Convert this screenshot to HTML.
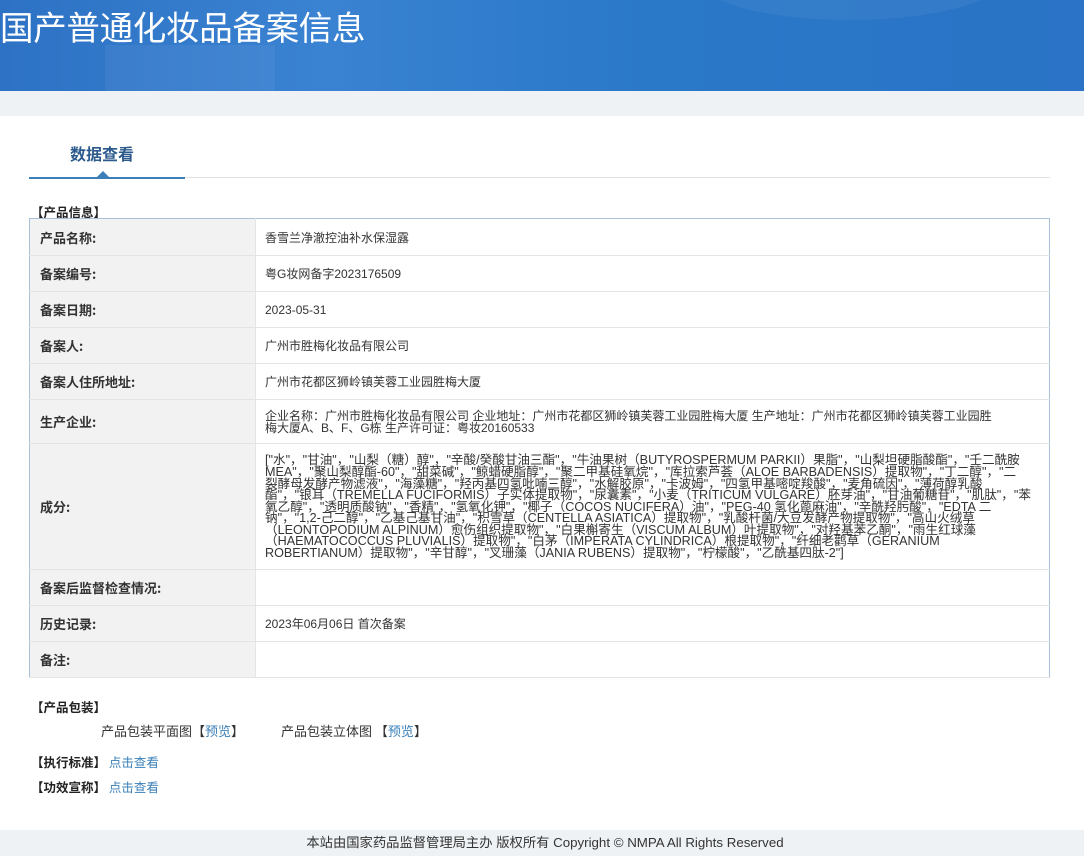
<!DOCTYPE html>
<html><head><meta charset="utf-8">
<style>
*{margin:0;padding:0;box-sizing:border-box}
body{width:1084px;height:856px;background:#fff;font-family:"Liberation Sans","Noto Sans CJK SC",sans-serif;color:#333;position:relative;overflow:hidden}
.hdr{position:absolute;left:0;top:0;width:1084px;height:91px;background:linear-gradient(90deg,#2d72c4 0%,#3a82d2 30%,#2a78c8 60%,#2a73c6 100%);overflow:hidden}
.hdr h1{position:absolute;left:0;top:1px;font-size:33.5px;font-weight:normal;color:#fff;letter-spacing:-0.3px;font-family:"Noto Sans CJK SC",sans-serif}
.band{position:absolute;left:0;top:91px;width:1084px;height:25px;background:#eef2f5}
.tab{position:absolute;left:70px;top:141px;font-size:16px;font-weight:bold;color:#2d5a8c;font-family:"Noto Sans CJK SC",sans-serif}
.line{position:absolute;left:29px;top:177px;width:1021px;height:1px;background:#e3e3e3}
.line2{position:absolute;left:29px;top:177px;width:156px;height:2px;background:#3c7fb8}
.tri{position:absolute;left:97px;top:171px;width:0;height:0;border-left:6px solid transparent;border-right:6px solid transparent;border-bottom:6px solid #3c7fb8}
.sec{position:absolute;font-size:12.5px;font-weight:bold;color:#222;font-family:"Noto Sans CJK SC",sans-serif}
table{position:absolute;left:29px;top:218px;width:1021px;border-collapse:collapse;border:1px solid #a9c0da;font-size:12px}
td{border-bottom:1px solid #e4e4e4;vertical-align:middle;font-family:"Liberation Sans","Noto Sans CJK SC",sans-serif}
td.l{width:226px;background:#f2f2f2;font-weight:bold;padding-left:10px;font-size:13px;color:#333;border-right:1px solid #e4e4e4;font-family:"Noto Sans CJK SC",sans-serif}
td.v{padding-left:9px;color:#333}
.ing{line-height:11.6px;font-size:12.6px;padding:9px 0 7px 9px;white-space:nowrap}
.t{position:absolute;font-size:13px;color:#333;font-family:"Noto Sans CJK SC",sans-serif}
.a{color:#3a7fb8}
.foot{position:absolute;left:0;top:830px;width:1084px;height:26px;background:#eef2f5;font-size:13.3px;color:#333;text-align:center;line-height:26px;padding-left:6px}
</style></head><body>
<div class="hdr"><h1>国产普通化妆品备案信息</h1>
<div style="position:absolute;left:105px;top:45px;width:170px;height:60px;background:rgba(255,255,255,0.05)"></div>
<div style="position:absolute;left:700px;top:-60px;width:300px;height:80px;border-radius:50%;background:rgba(255,255,255,0.05)"></div>
</div>
<div class="band"></div>
<div class="tab">数据查看</div>
<div class="line"></div><div class="line2"></div><div class="tri"></div>
<div class="sec" style="left:31px;top:202px">【产品信息】</div>
<table>
<tr style="height:37px"><td class="l">产品名称:</td><td class="v">香雪兰净澈控油补水保湿露</td></tr>
<tr style="height:36px"><td class="l">备案编号:</td><td class="v">粤G妆网备字2023176509</td></tr>
<tr style="height:36px"><td class="l">备案日期:</td><td class="v">2023-05-31</td></tr>
<tr style="height:36px"><td class="l">备案人:</td><td class="v">广州市胜梅化妆品有限公司</td></tr>
<tr style="height:36px"><td class="l">备案人住所地址:</td><td class="v">广州市花都区狮岭镇芙蓉工业园胜梅大厦</td></tr>
<tr style="height:44px"><td class="l">生产企业:</td><td class="v" style="line-height:12px">企业名称：广州市胜梅化妆品有限公司 企业地址：广州市花都区狮岭镇芙蓉工业园胜梅大厦 生产地址：广州市花都区狮岭镇芙蓉工业园胜<br>梅大厦A、B、F、G栋 生产许可证：粤妆20160533</td></tr>
<tr style="height:126px"><td class="l">成分:</td><td class="v ing">["水"，"甘油"，"山梨（糖）醇"，"辛酸/癸酸甘油三酯"，"牛油果树（BUTYROSPERMUM PARKII）果脂"，"山梨坦硬脂酸酯"，"壬二酰胺<br>MEA"，"聚山梨醇酯-60"，"甜菜碱"，"鲸蜡硬脂醇"，"聚二甲基硅氧烷"，"库拉索芦荟（ALOE BARBADENSIS）提取物"，"丁二醇"，"二<br>裂酵母发酵产物滤液"，"海藻糖"，"羟丙基四氢吡喃三醇"，"水解胶原"，"卡波姆"，"四氢甲基嘧啶羧酸"，"麦角硫因"，"薄荷醇乳酸<br>酯"，"银耳（TREMELLA FUCIFORMIS）子实体提取物"，"尿囊素"，"小麦（TRITICUM VULGARE）胚芽油"，"甘油葡糖苷"，"肌肽"，"苯<br>氧乙醇"，"透明质酸钠"，"香精"，"氢氧化钾"，"椰子（COCOS NUCIFERA）油"，"PEG-40 氢化蓖麻油"，"辛酰羟肟酸"，"EDTA 二<br>钠"，"1,2-己二醇"，"乙基己基甘油"，"积雪草（CENTELLA ASIATICA）提取物"，"乳酸杆菌/大豆发酵产物提取物"，"高山火绒草<br>（LEONTOPODIUM ALPINUM）愈伤组织提取物"，"白果槲寄生（VISCUM ALBUM）叶提取物"，"对羟基苯乙酮"，"雨生红球藻<br>（HAEMATOCOCCUS PLUVIALIS）提取物"，"白茅（IMPERATA CYLINDRICA）根提取物"，"纤细老鹳草（GERANIUM<br>ROBERTIANUM）提取物"，"辛甘醇"，"叉珊藻（JANIA RUBENS）提取物"，"柠檬酸"，"乙酰基四肽-2"]</td></tr>
<tr style="height:36px"><td class="l">备案后监督检查情况:</td><td class="v"></td></tr>
<tr style="height:36px"><td class="l">历史记录:</td><td class="v">2023年06月06日 首次备案</td></tr>
<tr style="height:36px"><td class="l">备注:</td><td class="v"></td></tr>
</table>
<div class="sec" style="left:31px;top:697px">【产品包装】</div>
<div class="t" style="left:101px;top:721px">产品包装平面图【<span class="a">预览</span>】</div>
<div class="t" style="left:281px;top:721px">产品包装立体图 【<span class="a">预览</span>】</div>
<div class="sec" style="left:31px;top:752px">【执行标准】 <span class="a" style="font-weight:normal">点击查看</span></div>
<div class="sec" style="left:31px;top:777px">【功效宣称】 <span class="a" style="font-weight:normal">点击查看</span></div>
<div class="foot">本站由国家药品监督管理局主办 版权所有 Copyright © NMPA All Rights Reserved</div>
</body></html>
